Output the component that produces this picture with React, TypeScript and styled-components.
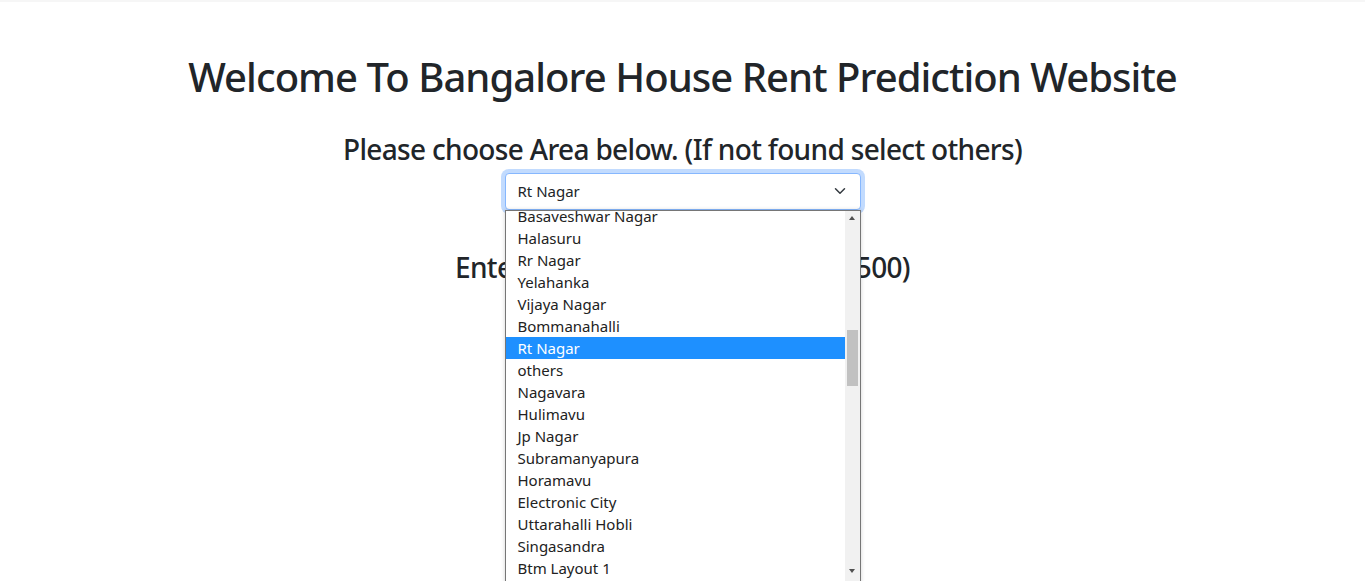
import React from "react";
import styled, { createGlobalStyle } from "styled-components";

const GlobalStyle = createGlobalStyle`
  html, body {
    margin: 0;
    padding: 0;
    background: #fff;
    overflow: hidden;
  }
  body {
    font-family: "Noto Sans", "Open Sans", Arial, sans-serif;
    color: #212529;
  }
`;

const Page = styled.div`
  width: 1365px;
  height: 581px;
  border-top: 2px solid #f6f6f6;
  box-sizing: border-box;
  display: flex;
  flex-direction: column;
  align-items: center;
`;

const Title = styled.h1`
  margin: 51px 0 0;
  font-size: 40px;
  font-weight: 500;
  line-height: 1.2;
  letter-spacing: -0.95px;
`;

const Heading = styled.h3<{ $top: number }>`
  margin: ${(p) => p.$top}px 0 6px;
  font-size: 28px;
  font-weight: 500;
  line-height: 1.2;
  letter-spacing: -0.67px;
`;

const SelectWrap = styled.div`
  position: relative;
  width: 356px;
`;

const SelectBox = styled.div`
  height: 37px;
  box-sizing: border-box;
  border: 1px solid #86b7fe;
  border-radius: 4px;
  box-shadow: 0 0 0 4px rgba(13, 110, 253, 0.25);
  padding: 0 14px 0 12px;
  display: flex;
  align-items: center;
  justify-content: space-between;
  font-size: 15px;
  background: #fff;
`;

const Chevron = () => (
  <svg width="12" height="12" viewBox="0 0 16 16">
    <path d="M2 5l6 6 6-6" fill="none" stroke="#343a40" strokeWidth="2" strokeLinecap="round" strokeLinejoin="round" />
  </svg>
);

const List = styled.div`
  position: absolute;
  top: 37px;
  left: 0;
  width: 356px;
  height: 373px;
  box-sizing: border-box;
  border: 1px solid #767676;
  background: #fff;
  box-shadow: 0 0 4px rgba(0, 0, 0, 0.18);
  display: flex;
  overflow: hidden;
  z-index: 5;
`;

const Options = styled.div`
  flex: 1;
  margin-top: -6px;
`;

const Option = styled.div<{ $active?: boolean }>`
  height: 22px;
  line-height: 22px;
  padding-left: 12px;
  font-size: 15px;
  white-space: nowrap;
  background: ${(p) => (p.$active ? "#1e90ff" : "transparent")};
  color: ${(p) => (p.$active ? "#fff" : "#222")};
`;

const Track = styled.div`
  width: 15px;
  background: #f1f1f1;
  display: flex;
  flex-direction: column;
  align-items: center;
`;

const Arrow = styled.div<{ $down?: boolean }>`
  height: ${(p) => (p.$down ? 17 : 15)}px;
  width: 15px;
  display: flex;
  align-items: ${(p) => (p.$down ? "flex-start" : "center")};
  padding-top: ${(p) => (p.$down ? 4 : 0)}px;
  box-sizing: border-box;
  justify-content: center;
  &::after {
    content: "";
    border-left: 3.5px solid transparent;
    border-right: 3.5px solid transparent;
    ${(p) => (p.$down ? "border-top: 4px solid #505050;" : "border-bottom: 4px solid #505050;")}
  }
`;

const TrackBody = styled.div`
  flex: 1;
  width: 100%;
  padding: 0 2px;
  box-sizing: border-box;
`;

const Thumb = styled.div`
  margin-top: 104px;
  height: 56px;
  background: #c1c1c1;
`;

const Input = styled.div`
  width: 356px;
  height: 38px;
  border: 1px solid #ced4da;
  border-radius: 4px;
  box-sizing: border-box;
`;

const areas = [
  "Basaveshwar Nagar",
  "Halasuru",
  "Rr Nagar",
  "Yelahanka",
  "Vijaya Nagar",
  "Bommanahalli",
  "Rt Nagar",
  "others",
  "Nagavara",
  "Hulimavu",
  "Jp Nagar",
  "Subramanyapura",
  "Horamavu",
  "Electronic City",
  "Uttarahalli Hobli",
  "Singasandra",
  "Btm Layout 1",
  "Kengeri",
];

function App() {
  const selected = "Rt Nagar";
  return (
    <Page>
      <GlobalStyle />
      <Title>Welcome To Bangalore House Rent Prediction Website</Title>
      <Heading $top={32}>Please choose Area below. (If not found select others)</Heading>
      <SelectWrap>
        <SelectBox>
          <span>{selected}</span>
          <Chevron />
        </SelectBox>
        <List>
          <Options>
            {areas.map((a) => (
              <Option key={a} $active={a === selected}>
                {a}
              </Option>
            ))}
          </Options>
          <Track>
            <Arrow />
            <TrackBody>
              <Thumb />
            </TrackBody>
            <Arrow $down />
          </Track>
        </List>
      </SelectWrap>
      <Heading $top={41}>Enter the Square Feet Area (Eg. 500)</Heading>
      <Input />
    </Page>
  );
}

export default App;
